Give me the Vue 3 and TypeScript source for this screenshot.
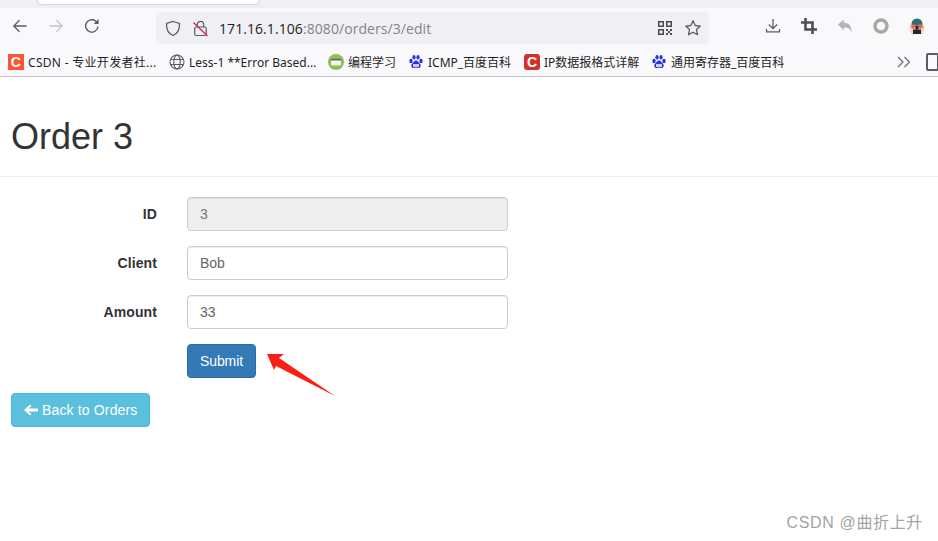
<script setup lang="ts">
interface Bookmark {
  label: string
  icon: 'csdn' | 'globe' | 'green' | 'baidu' | 'red'
  width: number
  spacing: number
}
const bookmarks: Bookmark[] = [
  { label: 'CSDN - 专业开发者社...', icon: 'csdn', width: 161, spacing: 0.3 },
  { label: 'Less-1 **Error Based...', icon: 'globe', width: 159, spacing: 0 },
  { label: '编程学习', icon: 'green', width: 80, spacing: 0 },
  { label: 'ICMP_百度百科', icon: 'baidu', width: 116, spacing: 0 },
  { label: 'IP数据报格式详解', icon: 'red', width: 127, spacing: 0 },
  { label: '通用寄存器_百度百科', icon: 'baidu', width: 150, spacing: 0 },
]
const fields = [
  { label: 'ID', value: '3', disabled: true },
  { label: 'Client', value: 'Bob', disabled: false },
  { label: 'Amount', value: '33', disabled: false },
]
</script>

<template>
  <div class="window">
    <div class="tabstrip"><div class="tab"></div></div>
    <div class="toolbar">
      <div class="nav">
        <svg class="ico" width="18" height="18" viewBox="0 0 18 18"><path d="M15.5 9H3M8.5 3.2 2.8 9l5.7 5.8" fill="none" stroke="#5b5b66" stroke-width="1.3"/></svg>
        <svg class="ico" width="18" height="18" viewBox="0 0 18 18"><path d="M2.5 9H15M9.5 3.2 15.2 9l-5.700 5.800" fill="none" stroke="#c4c4c9" stroke-width="1.3"/></svg>
        <svg class="ico" width="18" height="18" viewBox="0 0 18 18"><path d="M15 9.500A6.200 6.200 0 1 1 12.600 4L15 6" fill="none" stroke="#5b5b66" stroke-width="1.4"/><path d="M15.600 2v5h-5z" fill="#5b5b66"/></svg>
      </div>
      <div class="address">
        <svg width="16" height="17" viewBox="0 0 16 17"><path d="M8 1.500 14.500 3.500C14.700 9 13 13.500 8 15.500 3 13.500 1.300 9 1.500 3.500z" fill="none" stroke="#5b5b66" stroke-width="1.3"/></svg>
        <svg class="lock" width="15" height="17" viewBox="0 0 15 17"><rect x="1.700" y="7" width="11.500" height="8.500" rx="1.500" fill="none" stroke="#5b5b66" stroke-width="1.200"/><path d="M4.300 7V4.500a3.200 3.200 0 0 1 6.400 0V7" fill="none" stroke="#5b5b66" stroke-width="1.200"/><path d="M.5 2.500 14.500 16" stroke="#e22850" stroke-width="1.400"/></svg>
        <div class="url"><span class="host">171.16.1.106</span>:8080/orders/3/edit</div>
        <svg class="qr" width="14" height="14" viewBox="0 0 14 14"><g fill="#4a4a52"><path d="M0 0h6v6H0zM1.500 1.500v3h3v-3zM8 0h6v6H8zM9.500 1.500v3h3v-3zM0 8h6v6H0zM1.500 9.500v3h3v-3z" fill-rule="evenodd"/><path d="M8 8h2v2H8zM12 8h2v2h-2zM10 10h2v2h-2zM8 12h2v2H8zM12 12h2v2h-2z"/></g></svg>
        <svg class="star" width="18" height="18" viewBox="0 0 18 18"><path d="M9 1.800 11.200 6.500 16.300 7.100 12.500 10.600 13.500 15.700 9 13.200 4.500 15.700 5.500 10.600 1.700 7.100 6.800 6.500z" fill="none" stroke="#5b5b66" stroke-width="1.300" stroke-linejoin="round"/></svg>
      </div>
      <div class="actions">
        <svg width="16" height="16" viewBox="0 0 16 16"><path d="M8 1v9.500M3.800 6.500 8 10.700l4.200-4.200M1.500 11v2.800h13V11" fill="none" stroke="#5b5b66" stroke-width="1.300"/></svg>
        <svg width="16" height="16" viewBox="0 0 16 16"><path d="M4.500 0v11.500H16M0 4.500h11.500V16" fill="none" stroke="#4e4e57" stroke-width="2.600"/></svg>
        <svg width="16" height="16" viewBox="0 0 16 16"><path d="M1 6.500 6.800 1.500v3.300c5 0 8 2.700 7.700 9.500-1-3.500-3.300-5-7.700-4.800v2.800z" fill="#b5b5b8"/></svg>
        <svg width="16" height="16" viewBox="0 0 16 16"><circle cx="8" cy="8" r="6" fill="none" stroke="#a8a8a8" stroke-width="3.400"/></svg>
        <svg width="16" height="16" viewBox="0 0 16 16"><path d="M2.500 6a5.500 5.500 0 0 1 11 0v1h-11z" fill="#2f6d78"/><path d="M.5 7h15v4l-2 5h-11l-2-5z" fill="#f3cfc4"/><path d="M4 11.500h8V16H4z" fill="#22282c"/><circle cx="4.500" cy="8.500" r="2.300" fill="#e8694a"/><circle cx="11.500" cy="8.500" r="2.300" fill="#e8694a"/><path d="M6.500 7.500h3v4h-3z" fill="#22282c"/></svg>
      </div>
    </div>
    <div class="bookmarks">
      <div v-for="b in bookmarks" :key="b.label" class="bookmark" :style="{ width: b.width + 'px', letterSpacing: b.spacing + 'px' }">
        <span v-if="b.icon === 'csdn'" class="favicon csdn">C</span>
        <span v-else-if="b.icon === 'red'" class="favicon redc">C</span>
        <svg v-else-if="b.icon === 'globe'" class="fav" width="16" height="16" viewBox="0 0 16 16"><g fill="none" stroke="#5b5b66" stroke-width="1.100"><circle cx="8" cy="8" r="7"/><ellipse cx="8" cy="8" rx="3.200" ry="7"/><path d="M1.500 5.500h13M1.500 10.500h13"/></g></svg>
        <svg v-else-if="b.icon === 'green'" class="fav" width="16" height="16" viewBox="0 0 16 16"><circle cx="8" cy="8" r="8" fill="#8cc152"/><rect x="3" y="4.500" width="10" height="7" rx="1" fill="#f2f5ec"/><rect x="3" y="4.500" width="10" height="2" fill="#5e6e5a"/></svg>
        <svg v-else class="fav" width="16" height="16" viewBox="0 0 16 16"><g fill="#2932e1"><ellipse cx="3" cy="7" rx="1.700" ry="2.200"/><ellipse cx="6" cy="3.300" rx="1.600" ry="2.200"/><ellipse cx="10" cy="3.300" rx="1.600" ry="2.200"/><ellipse cx="13" cy="7" rx="1.700" ry="2.200"/><path d="M8 6.500c2 0 2.500 2 4 3.300 1.500 1.500.5 4.700-2 4.200-1-.2-3-.2-4 0-2.500.5-3.500-2.700-2-4.200 1.500-1.300 2-3.300 4-3.300z"/></g><rect x="5" y="10" width="6" height="3" fill="#fff" opacity=".75"/></svg>
        <span class="blabel">{{ b.label }}</span>
      </div>
      <div class="bm-end">
        <svg class="more" width="14" height="12" viewBox="0 0 14 12"><path d="M1 1l5 5-5 5M7.500 1l5 5-5 5" fill="none" stroke="#6b6b73" stroke-width="1.200"/></svg>
        <div class="device"></div>
      </div>
    </div>

    <main class="page">
      <h1 class="title">Order 3</h1>
      <hr class="rule" />
      <form class="form" @submit.prevent>
        <div v-for="f in fields" :key="f.label" class="row">
          <label class="label">{{ f.label }}</label>
          <input class="input" :class="{ off: f.disabled }" :value="f.value" :disabled="f.disabled" />
        </div>
        <div class="row submit-row">
          <button class="btn primary" type="button">Submit</button>
          <svg class="arrow" width="72" height="50" viewBox="0 0 72 50"><path d="M1 4 18 4 13 8 69 46 10 16 8 20z" fill="#fa1e14"/></svg>
        </div>
      </form>
      <button class="btn info" type="button">
        <svg class="back" width="14" height="12" viewBox="0 0 14 12"><path d="M0 6 6 .5 7.500 2 4.600 4.500H14v3H4.600L7.500 10 6 11.500z" fill="#fff"/></svg>
        Back to Orders
      </button>
    </main>
    <div class="mark">CSDN @曲折上升</div>
  </div>
</template>

<style>
html, body { margin: 0; background: #fff; }
</style>

<style scoped>
.window {
  position: relative;
  width: 938px;
  height: 541px;
  overflow: hidden;
  background: #fff;
  font-family: "Liberation Sans", "Noto Sans CJK SC", sans-serif;
}
.tabstrip { height: 8px; background: #f0f0f4; }
.tab {
  width: 221px;
  height: 4px;
  margin-left: 38px;
  background: #fff;
  border-radius: 0 0 4px 4px;
  box-shadow: 0 0 2px rgba(0,0,0,.35);
}
.toolbar {
  height: 36px;
  display: flex;
  align-items: flex-start;
  background: #f9f9fb;
}
.nav {
  width: 156px;
  height: 36px;
  padding-left: 11px;
  box-sizing: border-box;
  display: flex;
  align-items: center;
  gap: 18px;
}
.ico { flex: none; }
.address {
  width: 553px;
  height: 32px;
  margin-top: 4px;
  box-sizing: border-box;
  padding: 0 7px 0 9px;
  display: flex;
  align-items: center;
  background: #f0f0f4;
  border-radius: 4px;
}
.lock { margin-left: 12px; }
.url {
  margin-left: 11px;
  flex: 1;
  font-family: "Open Sans", sans-serif;
  font-size: 14px;
  letter-spacing: .07px;
  color: #84848c;
  white-space: nowrap;
}
.host { color: #1f1f26; }
.qr { margin-right: 12px; }
.actions {
  flex: 1;
  height: 36px;
  padding-left: 56px;
  display: flex;
  align-items: center;
  gap: 20px;
}
.bookmarks {
  height: 33px;
  box-sizing: border-box;
  padding: 4px 0 0 8px;
  display: flex;
  align-items: center;
  background: #f9f9fb;
  border-bottom: 1px solid #c8c8cc;
}
.bookmark {
  display: flex;
  align-items: center;
  flex: none;
  gap: 4px;
  font-size: 12px;
  color: #1f1f26;
  white-space: nowrap;
  font-family: "Noto Sans", "Noto Sans CJK SC", sans-serif;
}
.fav { flex: none; }
.favicon {
  flex: none;
  width: 16px;
  height: 16px;
  color: #fff;
  font: bold 14px/16px "Liberation Sans", sans-serif;
  text-align: center;
}
.csdn { background: #fc5531; }
.redc { background: #d0332a; border-radius: 3px; }
.blabel { overflow: hidden; }
.bm-end {
  margin-left: auto;
  width: 41px;
  flex: none;
  display: flex;
  align-items: center;
  gap: 15px;
  overflow: hidden;
}
.more { flex: none; }
.device {
  flex: none;
  width: 9px;
  height: 14px;
  border: 2px solid #5b5b66;
  border-radius: 2px;
}
.page { padding: 0 0 0 11px; color: #333; font-size: 14px; }
.title {
  margin: 0;
  padding-top: 40px;
  font-size: 36px;
  font-weight: 400;
  line-height: 40px;
  color: #333;
}
.rule {
  margin: 19px 0 20px -11px;
  border: 0;
  border-top: 1px solid #eee;
}
.form { display: flex; flex-direction: column; gap: 15px; margin-bottom: 15px; }
.row { display: flex; align-items: center; position: relative; }
.label {
  width: 146px;
  text-align: right;
  font-weight: 700;
  font-size: 14px;
  color: #333;
  letter-spacing: .1px;
}
.input {
  margin-left: 30px;
  width: 321px;
  height: 34px;
  box-sizing: border-box;
  padding: 6px 12px;
  border: 1px solid #ccc;
  border-radius: 4px;
  font: 14px "Liberation Sans", sans-serif;
  color: #666;
  background: #fff;
  box-shadow: inset 0 1px 1px rgba(0,0,0,.075);
}
.input.off { background: #eee; opacity: 1; color: #777; }
.submit-row { padding-left: 176px; }
.btn {
  height: 34px;
  box-sizing: border-box;
  padding: 6px 12px;
  border: 1px solid transparent;
  border-radius: 4px;
  font: 14px "Liberation Sans", sans-serif;
  color: #fff;
  display: inline-flex;
  align-items: center;
}
.primary { background: #337ab7; border-color: #2e6da4; letter-spacing: -.1px; }
.info { background: #5bc0de; border-color: #46b8da; letter-spacing: .15px; }
.back { margin-right: 4px; }
.arrow { position: absolute; left: 255px; top: 6px; }
.mark {
  position: absolute;
  right: 15px;
  bottom: 8px;
  font-size: 16px;
  color: #a3a3a3;
  letter-spacing: .65px;
}
</style>
